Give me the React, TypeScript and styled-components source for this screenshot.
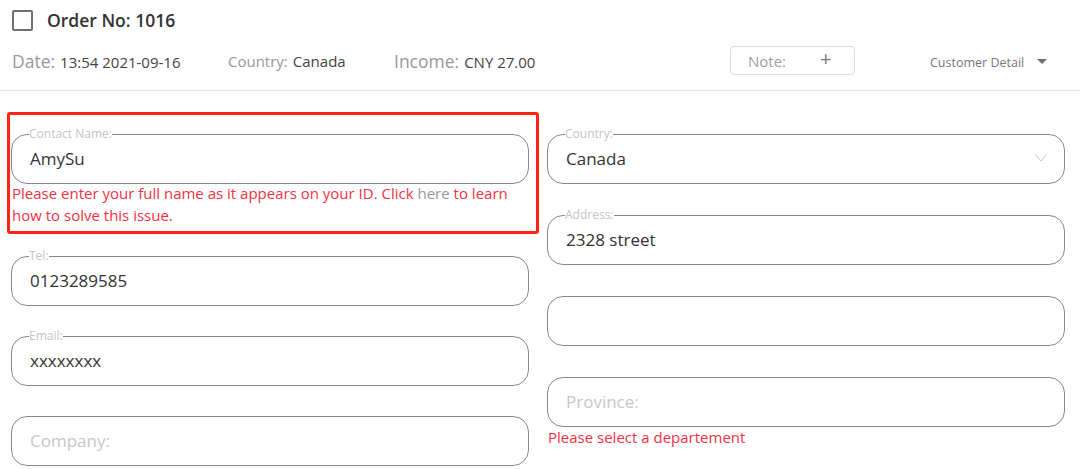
import React from "react";
import styled, { createGlobalStyle } from "styled-components";

const GlobalStyle = createGlobalStyle`
  html, body {
    margin: 0;
    padding: 0;
    background: #ffffff;
    font-family: "Open Sans", "Noto Sans", Arial, sans-serif;
    color: #333;
  }
  * { box-sizing: border-box; }
`;

interface FIELD {
  label?: string;
  value?: string;
  placeholder?: string;
  select?: boolean;
}

const leftFields: FIELD[] = [
  { label: "Tel:", value: "0123289585" },
  { label: "Email:", value: "xxxxxxxx" },
  { placeholder: "Company:" },
];

const rightFields: FIELD[] = [
  { label: "Address:", value: "2328 street" },
  {},
];

const FormField: React.FC<FIELD> = ({ label, value, placeholder, select }) => {
  return (
    <Field>
      <Legend>{label}</Legend>
      <FieldBody>
        <Input defaultValue={value} placeholder={placeholder} />
        {select && (
          <svg width="12" height="8" viewBox="0 0 12 8">
            <polyline
              points="0.5,0.5 6,7 11.5,0.5"
              fill="none"
              stroke="#c4c4c4"
              strokeWidth="1"
            />
          </svg>
        )}
      </FieldBody>
    </Field>
  );
};

const App: React.FC = () => {
  return (
    <Page>
      <GlobalStyle />
      <Header>
        <TitleRow>
          <Checkbox />
          <Title>Order No: 1016</Title>
        </TitleRow>
        <MetaRow>
          <Meta $width={216}>
            <MetaLabel $big>Date:</MetaLabel>
            <MetaValue>13:54 2021-09-16</MetaValue>
          </Meta>
          <Meta $width={166}>
            <MetaLabel>Country:</MetaLabel>
            <MetaValue>Canada</MetaValue>
          </Meta>
          <Meta $width={336}>
            <MetaLabel $big>Income:</MetaLabel>
            <MetaValue>CNY 27.00</MetaValue>
          </Meta>
          <NoteButton>
            <span>Note:</span>
            <Plus>+</Plus>
          </NoteButton>
          <Detail>
            Customer Detail
            <Caret />
          </Detail>
        </MetaRow>
      </Header>
      <Form>
        <Column $gap={24}>
          <ErrorGroup>
            <FormField label="Contact Name:" value="AmySu" />
            <ErrorText>
              Please enter your full name as it appears on your ID. Click{" "}
              <Link>here</Link> to learn how to solve this issue.
            </ErrorText>
          </ErrorGroup>
          {leftFields.map((f, i) => (
            <FormField key={i} {...f} />
          ))}
        </Column>
        <Column $gap={25}>
          <FormField label="Country:" value="Canada" select />
          {rightFields.map((f, i) => (
            <FormField key={i} {...f} />
          ))}
          <div>
            <FormField placeholder="Province:" />
            <ErrorText $short>Please select a departement</ErrorText>
          </div>
        </Column>
      </Form>
    </Page>
  );
};

export default App;

const Page = styled.div`
  width: 1080px;
  height: 469px;
  overflow: hidden;
`;

const Header = styled.div`
  padding: 10px 12px 15px 12px;
  border-bottom: 1px solid #e8e8e8;
`;

const TitleRow = styled.div`
  display: flex;
  align-items: center;
  height: 20px;
`;

const Checkbox = styled.div`
  width: 21px;
  height: 21px;
  border: 2px solid #707070;
  border-radius: 2px;
`;

const Title = styled.div`
  margin-left: 14px;
  font-size: 17.5px;
  font-weight: 600;
  color: #333;
`;

const MetaRow = styled.div`
  display: flex;
  align-items: center;
  height: 29px;
  margin-top: 16px;
`;

const Meta = styled.div<{ $width: number }>`
  width: ${(p) => p.$width}px;
  display: flex;
  align-items: baseline;
  gap: 5px;
  white-space: nowrap;
`;

const MetaLabel = styled.span<{ $big?: boolean }>`
  font-size: ${(p) => (p.$big ? "17.5px" : "15px")};
  color: #999;
`;

const MetaValue = styled.span`
  font-size: 15px;
  color: #444;
`;

const NoteButton = styled.div`
  width: 125px;
  height: 29px;
  border: 1px solid #dcdcdc;
  border-radius: 4px;
  display: flex;
  align-items: center;
  padding-left: 17px;
  font-size: 15px;
  color: #a0a0a0;
`;

const Plus = styled.span`
  margin-left: 34px;
  font-size: 20px;
  line-height: 1;
  color: #777;
  margin-top: -3px;
`;

const Detail = styled.div`
  margin-left: 75px;
  display: flex;
  align-items: center;
  gap: 13px;
  font-size: 12.5px;
  color: #777;
  margin-top: 3px;
`;

const Caret = styled.span`
  width: 0;
  height: 0;
  border-left: 5px solid transparent;
  border-right: 5px solid transparent;
  border-top: 5px solid #707070;
  margin-top: -2px;
`;

const Form = styled.div`
  display: grid;
  grid-template-columns: 518px 518px;
  column-gap: 18px;
  padding: 37px 0 0 11px;
`;

const Column = styled.div<{ $gap: number }>`
  display: flex;
  flex-direction: column;
  gap: ${(p) => p.$gap}px;
`;

const ErrorGroup = styled.div`
  position: relative;
  &::after {
    content: "";
    position: absolute;
    top: -16px;
    left: -4px;
    right: -10px;
    bottom: -8px;
    border: 3px solid #ff2416;
    border-radius: 3px;
    pointer-events: none;
  }
`;

const Field = styled.fieldset`
  margin: 0;
  padding: 0 17px 7px 17px;
  border: 1px solid #888;
  border-radius: 16px;
  min-width: 0;
`;

const Legend = styled.legend`
  padding: 0;
  height: 12px;
  font-size: 12px;
  line-height: 12px;
  color: #c4c4c4;
`;

const FieldBody = styled.div`
  display: flex;
  align-items: center;
  height: 36px;
`;

const Input = styled.input`
  flex: 1;
  min-width: 0;
  border: none;
  outline: none;
  padding: 0 0 0 1px;
  font-family: "Open Sans", "Noto Sans", Arial, sans-serif;
  font-size: 17px;
  color: #333;
  background: transparent;
  &::placeholder {
    color: #c8c8c8;
  }
`;

const ErrorText = styled.div<{ $short?: boolean }>`
  font-size: 15px;
  line-height: ${(p) => (p.$short ? "20px" : "22px")};
  margin-top: ${(p) => (p.$short ? "0" : "-2px")};
  color: #f5323f;
  padding-left: 1px;
`;

const Link = styled.span`
  color: #999;
`;
